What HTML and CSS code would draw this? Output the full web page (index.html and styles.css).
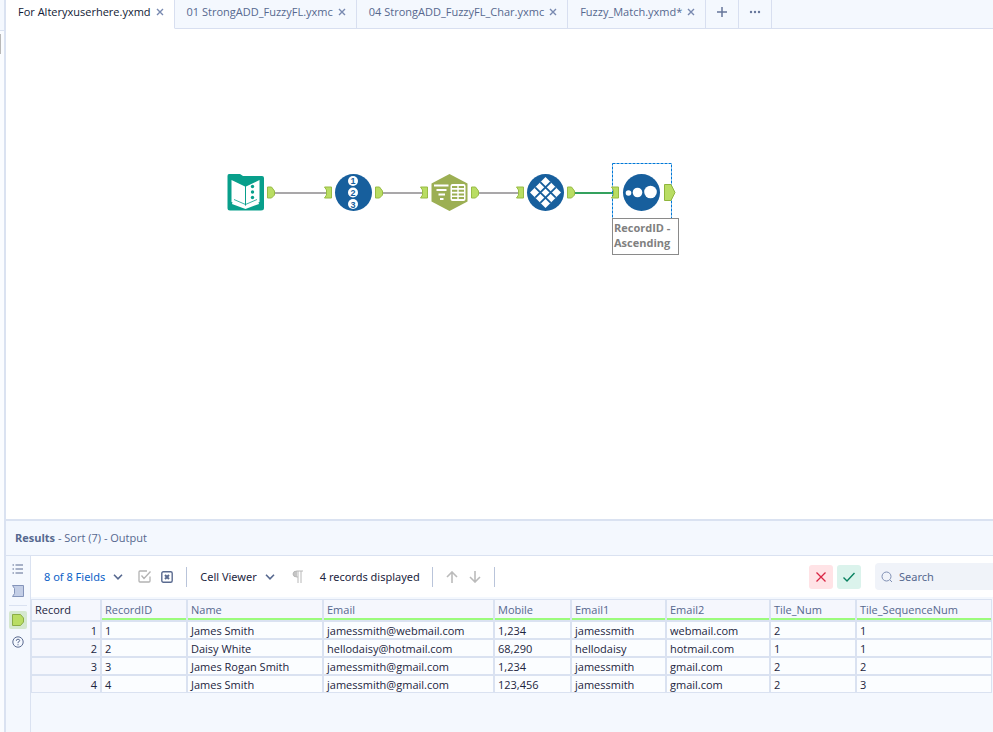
FILE: index.html
```html
<!DOCTYPE html>
<html lang="en">
<head>
  <meta charset="UTF-8" />
  <meta name="viewport" content="width=device-width, initial-scale=1.0"/>
  <title>For Alteryxuserhere.yxmd</title>
  <link rel="stylesheet" href="styles.css">
</head>
<body>
  <!-- Collapsed tool palette -->
  <aside class="edge"><div class="edge-top"></div><div class="edge-handle"></div></aside>
  <main class="workspace">
    <nav class="tabs">
      <div class="tab active"><button class="tab-name">For Alteryxuserhere.yxmd</button><button class="close" aria-label="Close"><svg width="8" height="8" viewBox="0 0 8 8"><path d="M1 1l6 6M7 1L1 7"/></svg></button></div>
      <div class="tab"><button class="tab-name">01 StrongADD_FuzzyFL.yxmc</button><button class="close" aria-label="Close"><svg width="8" height="8" viewBox="0 0 8 8"><path d="M1 1l6 6M7 1L1 7"/></svg></button></div>
      <div class="tab"><button class="tab-name">04 StrongADD_FuzzyFL_Char.yxmc</button><button class="close" aria-label="Close"><svg width="8" height="8" viewBox="0 0 8 8"><path d="M1 1l6 6M7 1L1 7"/></svg></button></div>
      <div class="tab"><button class="tab-name">Fuzzy_Match.yxmd*</button><button class="close" aria-label="Close"><svg width="8" height="8" viewBox="0 0 8 8"><path d="M1 1l6 6M7 1L1 7"/></svg></button></div>
      <button class="tab-tool" aria-label="New tab"><svg width="12" height="12" viewBox="0 0 12 12"><path d="M6 1v10M1 6h10" fill="none" stroke="#66769b" stroke-width="1.5"/></svg></button>
      <button class="tab-tool" aria-label="More"><svg width="12" height="12" viewBox="0 0 12 12" fill="#66769b"><circle cx="2" cy="6" r="1.2"/><circle cx="6" cy="6" r="1.2"/><circle cx="10" cy="6" r="1.2"/></svg></button>
      <div class="tab-rest"></div>
    </nav>

    <section class="canvas">
      <svg class="flow" width="480" height="64" viewBox="0 0 480 64">
        <defs>
          <path id="out" d="M0 0H4L7 4V8L4 11H0Z" fill="#b9dd63" stroke="#98bb45"/>
          <path id="in" d="M0 0H7V11H0L2 8V3Z" fill="#b9dd63" stroke="#98bb45"/>
        </defs>
        <!-- Wires -->
        <g stroke="#a9a7a9" stroke-width="2">
          <path d="M55 33H107M163 33H203M259 33H299"/>
          <path d="M355 33H395" stroke="#34a15e"/>
        </g>
        <rect x="392.5" y="3.5" width="59" height="60" fill="none" stroke="#0078d7" stroke-dasharray="3 1"/>
        <!-- Input -->
        <path d="M9 14H20L23 16H42Q44 16 44 18V48Q44 50.500 41 50.500H10Q7.500 50.500 7.500 48V16Q7.500 14 9 14Z" fill="#089f8b"/>
        <path d="M11.500 20L25 26.500V46.500L11.500 42Z M26 26.500L39.500 20V42L26 46.500Z" fill="#fff"/>
        <path d="M12.500 42.500L25.500 47.500L38.500 42.500" fill="none" stroke="#fff" stroke-width="3"/>
        <path d="M14 39.500L25.500 44.500L37 39.500" fill="none" stroke="#089f8b" stroke-width=".8"/>
        <g fill="#089f8b"><circle cx="32.500" cy="26.500" r="1.700"/><circle cx="32.500" cy="32" r="1.700"/><circle cx="32.500" cy="37.500" r="1.700"/></g>
        <use href="#out" x="47.500" y="27"/>
        <!-- Record ID -->
        <use href="#in" x="104.500" y="27"/>
        <circle cx="133.500" cy="32.500" r="18.500" fill="#175f9d"/>
        <g fill="#fff"><circle cx="133" cy="21" r="5"/><circle cx="133" cy="32.500" r="5"/><circle cx="133" cy="44" r="5"/></g>
        <g class="digits"><text x="133" y="24">1</text><text x="133" y="36">2</text><text x="133" y="48">3</text></g>
        <use href="#out" x="155.500" y="27"/>
        <!-- Text to columns -->
        <use href="#in" x="200.500" y="27"/>
        <path d="M229.500 14L247.500 23.500V41.500L229.500 51L211.500 41.500V23.500Z" fill="#9caf53"/>
        <g stroke="#fff" stroke-width="2.200"><path d="M214 25.500H228.500M216.500 30H226.500M218.500 34.500H225M220 39H223.500"/></g>
        <rect x="230.500" y="24" width="15" height="17" rx="2" fill="#fff"/>
        <path d="M232 27H244M232 30.700H244M232 34.400H244M232 38H244" stroke="#9caf53" stroke-width="2" stroke-dasharray="5.300 1.400"/>
        <use href="#out" x="251.500" y="27"/>
        <!-- Tile -->
        <use href="#in" x="296.500" y="27"/>
        <circle cx="325.500" cy="32.500" r="18.500" fill="#175f9d"/>
        <path d="M325.500 17L341 32.500L325.500 48L310 32.500Z" fill="#fff"/>
        <path d="M330.700 22.200L315.200 37.700M335.800 27.300L320.300 42.800M320.300 22.200L335.800 37.700M315.200 27.300L330.700 42.800" stroke="#175f9d" stroke-width="1.900"/>
        <use href="#out" x="347.500" y="27"/>
        <!-- Sort -->
        <use href="#in" x="391.500" y="27"/>
        <circle cx="421.500" cy="32.500" r="18.500" fill="#175f9d"/>
        <g fill="#fff"><circle cx="408.500" cy="33" r="2.800"/><circle cx="417.500" cy="32.500" r="4.800"/><circle cx="430.500" cy="32" r="6.300"/></g>
        <path d="M444.500 24.500H451L455 32.500L451 40.500H444.500Z" fill="#b9dd63" stroke="#8fb53c"/>
      </svg>
      <div class="annotation">RecordID - Ascending</div>
    </section>

    <section class="results">
      <h2 class="results-title"><b>Results</b> - Sort (7) - Output</h2>
      <div class="results-body">
        <div class="rail">
          <button class="rail-btn" aria-label="Messages"><svg width="12" height="12" viewBox="0 0 12 12"><path d="M3.500 2H11M3.500 6H11M3.500 10H11M.5 2H2M.5 6H2M.5 10H2" fill="none" stroke="#5b6b90"/></svg></button>
          <button class="rail-btn" aria-label="Input"><svg width="12" height="12" viewBox="0 0 12 12"><path d="M.5 .5H11.500V11.500H.5L2.500 8.500V3.500Z" fill="#c3cee6" stroke="#8494ba"/></svg></button>
          <hr>
          <button class="rail-btn on" aria-label="Output"><svg width="14" height="14" viewBox="0 0 14 14"><path d="M1.500 1.500H9.500L12.500 5V9L9.500 12.500H1.500Z" fill="#b9dd63" stroke="#8aad45"/></svg></button>
          <button class="rail-btn" aria-label="Help"><svg width="12" height="12" viewBox="0 0 12 12" fill="none" stroke="#5b6b90"><circle cx="6" cy="6" r="5.200"/><path d="M4.300 4.800Q4.300 3.200 6 3.200T7.700 4.700Q7.700 5.500 6 6.300V7.200M6 8.200V9.300"/></svg></button>
        </div>
        <div class="data">
          <div class="toolbar">
            <button class="menu fields">8 of 8 Fields <svg width="10" height="6" viewBox="0 0 10 6"><path d="M1 .8L5 4.800L9 .8"/></svg></button>
            <button class="icon check" aria-label="Select all"><svg width="13" height="13" viewBox="0 0 13 13" fill="none" stroke="#b3b3b3" stroke-width="1.300"><path d="M9 1H2Q1 1 1 2V11Q1 12 2 12H11Q12 12 12 11V6.500M3.500 5.500L6 8.500L12.500 1.500"/></svg></button>
            <button class="icon" aria-label="Deselect all"><svg width="12" height="12" viewBox="0 0 12 12" fill="none" stroke="#5b6b90" stroke-width="1.400"><rect x=".8" y=".8" width="10.400" height="10.400" rx="1.500"/><path d="M4 4l4 4M8 4L4 8" stroke-width="2"/></svg></button>
            <span class="sep"></span>
            <button class="menu viewer">Cell Viewer <svg width="10" height="6" viewBox="0 0 10 6"><path d="M1 .8L5 4.800L9 .8"/></svg></button>
            <button class="icon pilcrow" aria-label="Show whitespace"><svg width="11" height="13" viewBox="0 0 11 13"><path d="M5 1Q1 1 1 4T5 7Z" fill="#c5c5c5"/><path d="M11 1H5Q1 1 1 4T5 7H6M6 1V13M9 1V13" fill="none" stroke="#b8b8b8"/></svg></button>
            <span class="count">4 records displayed</span>
            <span class="sep"></span>
            <button class="icon up" aria-label="Previous"><svg width="12" height="12" viewBox="0 0 12 12"><path d="M6 12V1M1 6L6 1L11 6"/></svg></button>
            <button class="icon down" aria-label="Next"><svg width="12" height="12" viewBox="0 0 12 12"><path d="M6 0V11M1 6L6 11L11 6"/></svg></button>
            <span class="sep"></span>
            <div class="actions">
              <button class="cancel" aria-label="Cancel"><svg width="12" height="12" viewBox="0 0 12 12"><path d="M1.500 1.500l9 9M10.500 1.500l-9 9"/></svg></button>
              <button class="apply" aria-label="Apply"><svg width="12" height="12" viewBox="0 0 12 12"><path d="M.5 6.500L4 10L11.500 2"/></svg></button>
              <label class="search"><svg width="12" height="12" viewBox="0 0 12 12" fill="none" stroke="#8090b4"><circle cx="5.500" cy="5.500" r="4.500"/><path d="M9 9l2 2"/></svg><input type="text" placeholder="Search" aria-label="Search"></label>
            </div>
          </div>
          <table>
            <colgroup><col class="c-record"><col class="c-id"><col class="c-name"><col class="c-email"><col class="c-mobile"><col class="c-email1"><col class="c-email2"><col class="c-id"><col class="c-name"></colgroup>
            <thead>
              <tr><th>Record</th><th>RecordID</th><th>Name</th><th>Email</th><th>Mobile</th><th>Email1</th><th>Email2</th><th>Tile_Num</th><th>Tile_SequenceNum</th></tr>
            </thead>
            <tbody>
              <tr><td>1</td><td>1</td><td>James Smith</td><td>jamessmith@webmail.com</td><td>1,234</td><td>jamessmith</td><td>webmail.com</td><td>2</td><td>1</td></tr>
              <tr><td>2</td><td>2</td><td>Daisy White</td><td>hellodaisy@hotmail.com</td><td>68,290</td><td>hellodaisy</td><td>hotmail.com</td><td>1</td><td>1</td></tr>
              <tr><td>3</td><td>3</td><td>James Rogan Smith</td><td>jamessmith@gmail.com</td><td>1,234</td><td>jamessmith</td><td>gmail.com</td><td>2</td><td>2</td></tr>
              <tr><td>4</td><td>4</td><td>James Smith</td><td>jamessmith@gmail.com</td><td>123,456</td><td>jamessmith</td><td>gmail.com</td><td>2</td><td>3</td></tr>
            </tbody>
          </table>
        </div>
      </div>
    </section>
  </main>
</body>
</html>
```
FILE: styles.css
```css
* { box-sizing: border-box; margin: 0; padding: 0; }
body {
  display: flex;
  height: 100vh;
  overflow: hidden;
  font-family: "Open Sans", "Noto Sans", sans-serif;
  font-size: 11px;
  line-height: 16px;
  color: #1c2540;
  background: #fff;
}
button {
  font: inherit;
  color: inherit;
  background: none;
  border: none;
  cursor: pointer;
}
svg { display: block; flex: none; }

/* Left edge */
.edge {
  flex: none;
  width: 6px;
  background: #fafcff;
  border-right: 2px solid #dae2f1;
}
.edge-top {
  height: 31px;
  background: #f4f8fe;
  border-bottom: 1px solid #dae2f1;
}
.edge-handle {
  width: 1px;
  height: 20px;
  margin-top: 3px;
  background: #b8b8b8;
}
.workspace {
  flex: 1;
  min-width: 0;
  display: flex;
  flex-direction: column;
}

/* Tabs */
.tabs { display: flex; height: 29px; flex: none; }
.tab, .tab-tool, .tab-rest {
  background: #f4f8fe;
  border-bottom: 1px solid #d8dff0;
}
.tab, .tab-tool {
  display: flex;
  align-items: center;
  padding-bottom: 4px;
  border-right: 1px solid #d8dff0;
}
.tab {
  gap: 5px;
  padding-left: 12px;
  padding-right: 10px;
  color: #56688f;
  white-space: nowrap;
}
.tab.active {
  background: #fff;
  border-bottom-color: #fff;
  color: #111a35;
}
.close path { stroke: #7889b0; stroke-width: 1.4; }
.tab-tool { width: 33px; justify-content: center; }
.tab-rest { flex: 1; }

/* Canvas */
.canvas { position: relative; flex: 1; min-height: 0; }
.flow { position: absolute; left: 214px; top: 131px; }
.digits {
  font-family: "Liberation Sans", sans-serif;
  font-size: 9px;
  font-weight: bold;
  text-anchor: middle;
  fill: #175f9d;
}
.annotation {
  position: absolute;
  left: 606px;
  top: 189px;
  width: 67px;
  padding: 1px 1px 4px;
  line-height: 15px;
  font-weight: bold;
  color: #808080;
  background: #fff;
  border: 1px solid #8a8a8a;
}

/* Results */
.results {
  flex: none;
  height: 213px;
  display: flex;
  flex-direction: column;
  background: #f4f8fe;
  border-top: 2px solid #dae2f1;
}
.results-title {
  height: 35px;
  padding: 9px;
  font-size: 11px;
  font-weight: normal;
  color: #56688f;
  border-bottom: 1px solid #dae2f1;
}
.results-body { flex: 1; display: flex; min-height: 0; }
.rail {
  width: 25px;
  padding-top: 4px;
  display: flex;
  flex-direction: column;
  align-items: center;
  border-right: 1px solid #dae2f1;
}
.rail-btn {
  display: flex;
  align-items: center;
  justify-content: center;
  width: 18px;
  height: 18px;
  margin-bottom: 4px;
}
.rail hr {
  width: 18px;
  margin: 1px 0 5px;
  border: 0;
  border-top: 1px solid #dae2f1;
}
.rail-btn.on { background: #d5e8cf; border-radius: 2px; }
.data { flex: 1; min-width: 0; }

/* Toolbar */
.toolbar {
  display: flex;
  align-items: center;
  height: 43px;
  padding-left: 13px;
  font-family: "Noto Sans", sans-serif;
  background: #fff;
  border-bottom: 2px solid #f4f8fe;
  white-space: nowrap;
}
.menu { display: flex; align-items: center; gap: 8px; }
.menu path { fill: none; stroke: #56688f; stroke-width: 1.6; }
.fields { color: #0c62c7; }
.check { margin-left: 15px; margin-right: 10px; }
.sep { width: 1px; height: 20px; margin: 0 13px; background: #b9c4da; }
.pilcrow { margin: 0 17px; }
.up { margin-right: 11px; }
.up path, .down path { fill: none; stroke: #bbb; stroke-width: 1.6; }
.count + .sep { margin: 0 13px 0 12px; }
.actions { display: flex; align-items: center; margin-left: auto; }
.cancel, .apply {
  display: flex;
  align-items: center;
  justify-content: center;
  width: 24px;
  height: 24px;
  border-radius: 3px;
}
.cancel { margin-right: 4px; background: #ffe3e6; }
.apply { margin-right: 14px; background: #dbf3ec; }
.cancel path { stroke: #d92544; stroke-width: 1.3; }
.apply path { fill: none; stroke: #08805f; stroke-width: 1.4; }
.search {
  display: flex;
  align-items: center;
  gap: 6px;
  width: 118px;
  height: 27px;
  padding-left: 6px;
  background: #f0f3f9;
  border-radius: 4px 0 0 4px;
}
.search input {
  width: 90px;
  font: inherit;
  background: none;
  border: none;
  outline: none;
}
.search input::placeholder { color: #56688f; opacity: 1; }

/* Data grid */
table {
  width: 961px;
  table-layout: fixed;
  border-collapse: separate;
  border-spacing: 0;
  border: 0;
}
.c-record { width: 70px; }
.c-id { width: 86px; }
.c-name { width: 136px; }
.c-email { width: 171px; }
.c-mobile { width: 77px; }
.c-email1 { width: 95px; }
.c-email2 { width: 104px; }
th, td {
  padding: 0 3px;
  text-align: left;
  font-weight: normal;
  white-space: nowrap;
  border: 1px solid #dae2f1;
}
th {
  height: 22px;
  color: #56688f;
  background: linear-gradient(#9bfb7c, #9bfb7c) bottom / 100% 2px no-repeat padding-box, #f5f7fd;
}
th:first-child { background: #f5f7fd; color: #1c2540; }
td {
  height: 18px;
  padding-top: 1px;
  line-height: 15px;
  background: #fbfdff;
}
td:first-child { text-align: right; background: #f5f7fd; }
```
